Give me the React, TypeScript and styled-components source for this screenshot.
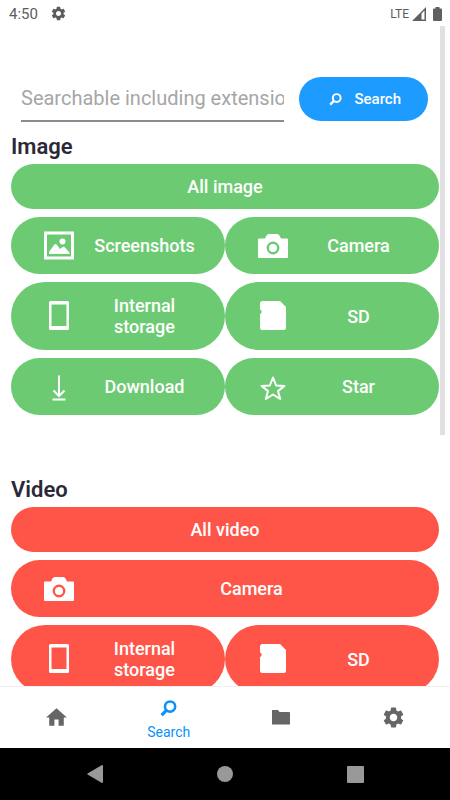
import React from "react";
import styled, { createGlobalStyle } from "styled-components";
import { MdSettings, MdHome } from "react-icons/md";

const GlobalStyle = createGlobalStyle`
  *, *::before, *::after { box-sizing: border-box; }
  body {
    margin: 0;
    background: #fff;
    font-family: Roboto, "Noto Sans", sans-serif;
  }
  button, input { font-family: inherit; }
`;

const Screen = styled.div`
  height: 100vh;
  display: flex;
  flex-direction: column;
  background: #fff;
  overflow: hidden;
`;

const StatusBar = styled.header`
  flex: none;
  height: 26px;
  padding: 1px 8px 0 9px;
  display: flex;
  align-items: center;
  color: #5c5c5c;
  font-size: 15px;
`;

const StatusGear = styled(MdSettings)`
  margin-left: 12px;
  margin-right: auto;
`;

const Network = styled.span`
  font-size: 12px;
  margin-right: 3px;
`;

const Signal = styled.svg`
  margin-right: 7px;
`;

const Viewport = styled.main`
  flex: 1;
  min-height: 0;
  position: relative;
  overflow: hidden;
  padding: 50px 11px 0;
`;

const ScrollThumb = styled.div`
  position: absolute;
  top: 0;
  right: 5px;
  width: 5px;
  height: 62%;
  background: #e0e0e2;
`;

const SearchForm = styled.form`
  display: flex;
  align-items: center;
  gap: 15px;
  padding: 0 11px 0 10px;
`;

const SearchField = styled.input`
  flex: 1;
  min-width: 0;
  height: 46px;
  padding: 0;
  border: 0;
  border-bottom: 2px solid #8c8c8c;
  border-radius: 0;
  background: transparent;
  color: #333;
  font-size: 20px;
  outline: none;
  &::placeholder { color: #a6a6a6; opacity: 1; }
`;

const SearchButton = styled.button`
  flex: none;
  height: 44px;
  padding: 0 27px 0 30px;
  display: flex;
  align-items: center;
  gap: 12px;
  border: 0;
  border-radius: 22px;
  background: #1e9bff;
  color: #fff;
  font-size: 15px;
  font-weight: 500;
`;

const Section = styled.section`
  display: flex;
  flex-direction: column;
  gap: 8px;
  margin-bottom: 50px;
`;

const Heading = styled.h2`
  margin: 11px 0 -4px;
  color: #2b2938;
  font-size: 22px;
  line-height: 27px;
  font-weight: 600;
`;

const Pill = styled.button<{ $tone: string }>`
  flex: 1;
  min-width: 0;
  min-height: 45px;
  padding: 0;
  border: 0;
  border-radius: 34px;
  background: ${(p) => p.$tone};
  color: #fff;
  font-size: 18px;
  line-height: 21px;
  font-weight: 500;
`;

const IconPill = styled(Pill)`
  min-height: 57px;
  padding: 13px 10px 13px 33px;
  display: flex;
  align-items: center;
`;

const PillIcon = styled.svg`
  flex: none;
  width: 30px;
  height: 30px;
`;

const Label = styled.span`
  flex: 1;
  padding: 0 12px;
  text-align: center;
`;

const Row = styled.div`
  display: flex;
`;

const TabBar = styled.nav`
  flex: none;
  height: 62px;
  display: grid;
  grid-template-columns: repeat(4, 1fr);
  border-top: 1px solid #f0f0f0;
  background: #fff;
`;

const Tab = styled.button<{ $active?: boolean }>`
  display: flex;
  flex-direction: column;
  align-items: center;
  justify-content: center;
  gap: 6px;
  padding: ${(p) => (p.$active ? "6px 0 0" : "0")};
  border: 0;
  background: transparent;
  color: ${(p) => (p.$active ? "#0a91fb" : "#666")};
  font-size: 14px;
  line-height: 18px;
`;

const SystemBar = styled.footer`
  flex: none;
  height: 52px;
  padding: 0 30px;
  display: grid;
  grid-template-columns: repeat(3, 1fr);
  background: #000;
`;

const SystemButton = styled.button`
  display: flex;
  align-items: center;
  justify-content: center;
  padding: 0;
  border: 0;
  background: transparent;
`;

const GREEN = "#6ccb72";
const RED = "#ff5549";

type Kind = "picture" | "camera" | "phone" | "sd" | "download" | "star";

const drawings: Record<Kind, (tone: string) => React.ReactNode> = {
  picture: () => (
    <>
      <path fill="currentColor" fillRule="evenodd" d="M0 .5h30v28H0zM3 3.500v22h24v-22z" />
      <path
        fill="currentColor"
        d="M5 23v-2l5-7q1.500-2 3 0l3 4 2-1.500q1.500-1.500 3 0l4.500 5v1.500z"
      />
      <circle cx="18.500" cy="10.500" r="3" fill="currentColor" />
    </>
  ),
  camera: (tone) => (
    <>
      <path
        fill="currentColor"
        d="M1 7.500h6l1.500-3Q9.200 3 11 3h8q1.800 0 2.500 1.500l1.500 3h6q1 0 1 1V26q0 1-1 1H1q-1 0-1-1V8.500q0-1 1-1z"
      />
      <circle cx="15" cy="17" r="5.200" fill="none" stroke={tone} strokeWidth="2.400" />
    </>
  ),
  phone: () => (
    <path
      fill="currentColor"
      fillRule="evenodd"
      d="M6.500 0h17Q25 0 25 1.500v26q0 1.500-1.500 1.500h-17Q5 29 5 27.500v-26Q5 0 6.500 0zM7.500 3.500v21.500h15V3.500z"
    />
  ),
  sd: () => (
    <path
      fill="currentColor"
      d="M4.500 0H22l6 6v20.500Q28 29 25.500 29h-21Q2 29 2 26.500V13l1.500-1V9.500L2 8.500V2.500Q2 0 4.500 0z"
    />
  ),
  download: () => (
    <g fill="none" stroke="currentColor" strokeWidth="2">
      <path d="M15 3.500v20.500M9.500 18.500L15 24l5.500-5.500" />
      <path d="M8.500 27.500h13" />
    </g>
  ),
  star: () => (
    <path
      fill="none"
      stroke="currentColor"
      strokeWidth="2"
      strokeLinejoin="round"
      d="M15 5.500l3.100 7.900 8.300.5-6.400 5.200 2.200 7.900-7.200-4.500-7.200 4.500 2.200-7.900-6.400-5.200 8.300-.5z"
    />
  ),
};

function MediaButton({ icon, label, tone }: { icon: Kind; label: string; tone: string }) {
  return (
    <IconPill type="button" $tone={tone}>
      <PillIcon viewBox="0 0 30 30" aria-hidden="true">
        {drawings[icon](tone)}
      </PillIcon>
      <Label>{label}</Label>
    </IconPill>
  );
}

function SearchGlyph({ size }: { size: number }) {
  return (
    <svg width={size} height={size} viewBox="0 0 16 16" fill="none" stroke="currentColor" aria-hidden="true">
      <circle cx="9.500" cy="6.200" r="4.800" strokeWidth="2.400" />
      <path d="M6 9.800L1.500 14.300" strokeWidth="3" />
    </svg>
  );
}

export default function App() {
  return (
    <Screen>
      <GlobalStyle />
      <StatusBar>
        <span>4:50</span>
        <StatusGear size={17} />
        <Network>LTE</Network>
        <Signal width="14" height="14" viewBox="0 0 14 14" aria-hidden="true">
          <path fill="#606060" fillRule="evenodd" d="M14 0v14H0zM9.500 6.500v6h3V3.500z" />
        </Signal>
        <svg width="9" height="14" viewBox="0 0 9 14" aria-hidden="true">
          <path fill="#606060" d="M2.500 0h4v1.500H8q1 0 1 1V13q0 1-1 1H1q-1 0-1-1V2.500q0-1 1-1h1.500z" />
        </svg>
      </StatusBar>

      <Viewport>
        <SearchForm onSubmit={(e) => e.preventDefault()}>
          <SearchField
            type="text"
            aria-label="Search files"
            placeholder="Searchable including extension"
          />
          <SearchButton type="submit">
            <SearchGlyph size={13} />
            Search
          </SearchButton>
        </SearchForm>

        <Section>
          <Heading>Image</Heading>
          <Row>
            <Pill type="button" $tone={GREEN}>All image</Pill>
          </Row>
          <Row>
            <MediaButton icon="picture" label="Screenshots" tone={GREEN} />
            <MediaButton icon="camera" label="Camera" tone={GREEN} />
          </Row>
          <Row>
            <MediaButton icon="phone" label="Internal storage" tone={GREEN} />
            <MediaButton icon="sd" label="SD" tone={GREEN} />
          </Row>
          <Row>
            <MediaButton icon="download" label="Download" tone={GREEN} />
            <MediaButton icon="star" label="Star" tone={GREEN} />
          </Row>
        </Section>

        <Section>
          <Heading>Video</Heading>
          <Row>
            <Pill type="button" $tone={RED}>All video</Pill>
          </Row>
          <Row>
            <MediaButton icon="camera" label="Camera" tone={RED} />
          </Row>
          <Row>
            <MediaButton icon="phone" label="Internal storage" tone={RED} />
            <MediaButton icon="sd" label="SD" tone={RED} />
          </Row>
        </Section>
        <ScrollThumb />
      </Viewport>

      <TabBar>
        <Tab type="button" aria-label="Home">
          <MdHome size={25} />
        </Tab>
        <Tab type="button" $active>
          <SearchGlyph size={17} />
          <span>Search</span>
        </Tab>
        <Tab type="button" aria-label="Folders">
          <svg width="18" height="15" viewBox="0 0 18 15" aria-hidden="true">
            <path fill="currentColor" d="M0 0h6l1.500 2H17q1 0 1 1v11.500H0z" />
          </svg>
        </Tab>
        <Tab type="button" aria-label="Settings">
          <MdSettings size={25} />
        </Tab>
      </TabBar>

      <SystemBar>
        <SystemButton type="button" aria-label="Back">
          <svg width="16" height="18" viewBox="0 0 16 18" aria-hidden="true">
            <path fill="#999" d="M15 0q1 0 1 1v16q0 1-1 1L.5 9.500Q0 9 .5 8.500z" />
          </svg>
        </SystemButton>
        <SystemButton type="button" aria-label="Home screen">
          <svg width="16" height="16" viewBox="0 0 16 16" aria-hidden="true">
            <circle cx="8" cy="8" r="8" fill="#999" />
          </svg>
        </SystemButton>
        <SystemButton type="button" aria-label="Recent apps">
          <svg width="17" height="17" viewBox="0 0 17 17" aria-hidden="true">
            <rect width="17" height="17" rx="1" fill="#999" />
          </svg>
        </SystemButton>
      </SystemBar>
    </Screen>
  );
}
